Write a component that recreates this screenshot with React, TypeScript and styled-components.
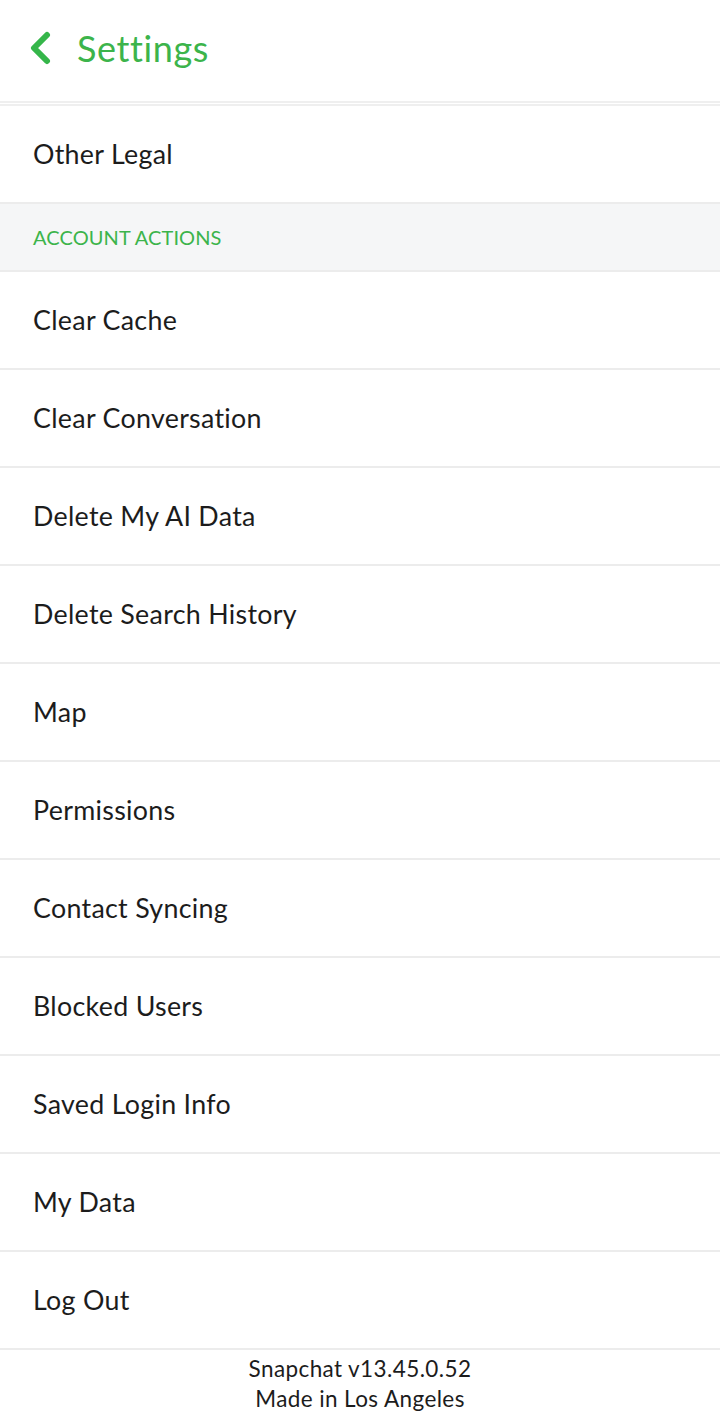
import React from "react";
import styled, { createGlobalStyle } from "styled-components";

const Global = createGlobalStyle`
  html, body { margin: 0; padding: 0; background: #ffffff; }
  body { font-family: Lato, "Noto Sans", sans-serif; -webkit-font-smoothing: antialiased; }
`;

const Page = styled.div`
  width: 720px;
  min-height: 1428px;
  background: #ffffff;
  display: flex;
  flex-direction: column;
`;

const Header = styled.header`
  height: 95px;
  padding: 0 0 6px 28px;
  display: flex;
  align-items: center;
  border-bottom: 2px solid #efefef;
  box-sizing: content-box;
  margin-bottom: 1px;
`;

const BackIcon = styled.svg`
  width: 24px;
  height: 34px;
  flex: none;
`;

const Title = styled.h1`
  margin: 0 0 0 25px;
  font-size: 36px;
  font-weight: 400;
  color: #3cb44b;
  letter-spacing: 0.6px;
`;

const List = styled.div`
  border-top: 2px solid #efefef;
  display: flex;
  flex-direction: column;
`;

const Row = styled.div`
  height: 96px;
  display: flex;
  align-items: center;
  padding-left: 33px;
  border-bottom: 2px solid #ececec;
  font-size: 26.8px;
  color: #1c1c1c;
  letter-spacing: 0.3px;
`;

const SectionHeader = styled.div`
  height: 66px;
  display: flex;
  align-items: center;
  padding-left: 33px;
  background: #f5f6f7;
  border-bottom: 2px solid #ececec;
  font-size: 20px;
  color: #3cb44b;
  letter-spacing: 0.1px;
`;

const Footer = styled.footer`
  padding-top: 4px;
  text-align: center;
  font-size: 22.5px;
  line-height: 30px;
  color: #1c1c1c;
  letter-spacing: 0.4px;
`;

const items = [
  "Clear Cache",
  "Clear Conversation",
  "Delete My AI Data",
  "Delete Search History",
  "Map",
  "Permissions",
  "Contact Syncing",
  "Blocked Users",
  "Saved Login Info",
  "My Data",
  "Log Out",
];

export default function App() {
  return (
    <Page>
      <Global />
      <Header>
        <BackIcon viewBox="0 0 24 34">
          <path
            d="M19 4 L6 17 L19 30"
            fill="none"
            stroke="#35b64a"
            strokeWidth="6"
            strokeLinecap="round"
            strokeLinejoin="round"
          />
        </BackIcon>
        <Title>Settings</Title>
      </Header>
      <List>
        <Row>Other Legal</Row>
        <SectionHeader>ACCOUNT ACTIONS</SectionHeader>
        {items.map((t) => (
          <Row key={t}>{t}</Row>
        ))}
      </List>
      <Footer>
        <div>Snapchat v13.45.0.52</div>
        <div>Made in Los Angeles</div>
      </Footer>
    </Page>
  );
}
